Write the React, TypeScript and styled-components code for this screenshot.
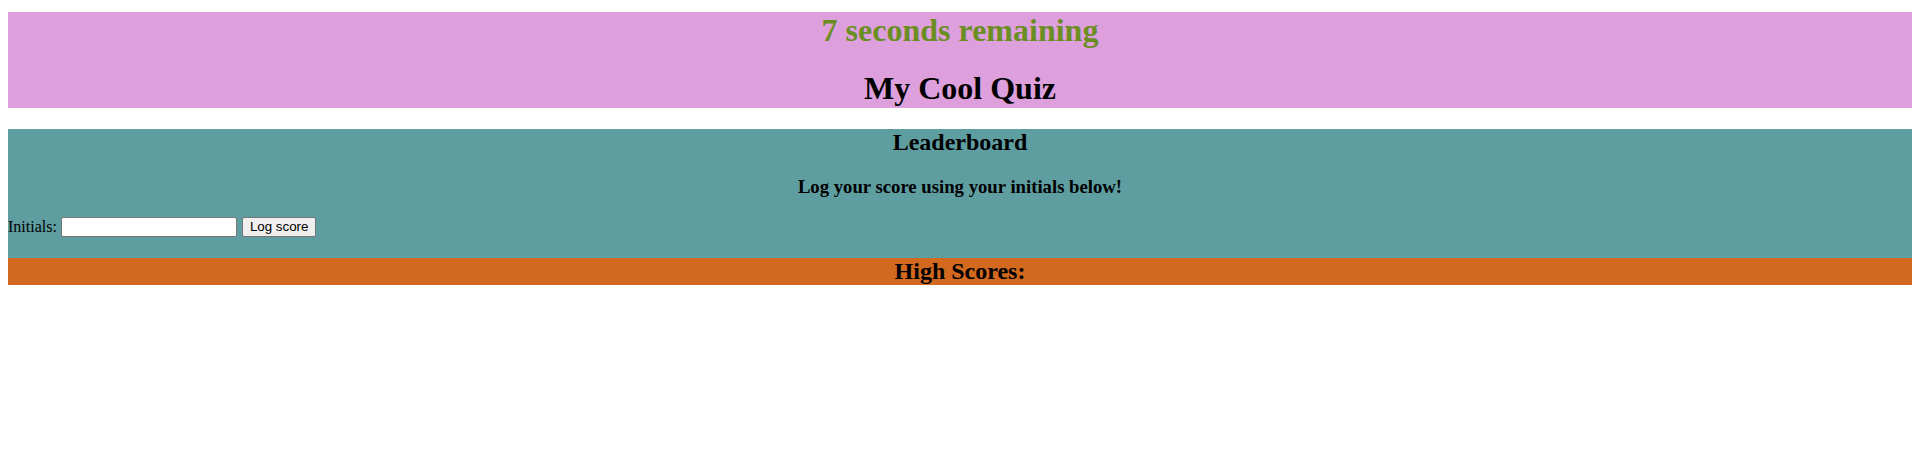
import React from "react";
import styled, { createGlobalStyle } from "styled-components";

const GlobalStyle = createGlobalStyle`
  html, body {
    margin: 0;
    padding: 0;
    background: #ffffff;
    overflow: hidden;
  }
  body {
    font-family: "Liberation Serif", "Times New Roman", serif;
    color: #000000;
  }
`;

const Page = styled.div`
  width: 1904px;
  padding: 12px 0 0 8px;
`;

const Header = styled.header`
  background: #dda0dd;
  text-align: center;
  padding-bottom: 1px;
`;

const Timer = styled.div`
  font-size: 32px;
  font-weight: bold;
  line-height: 37px;
  color: #6b8e23;
`;

const Title = styled.h1`
  margin: 21px 0 0;
  font-size: 32px;
  font-weight: bold;
  line-height: 37px;
`;

const Leaderboard = styled.section`
  margin-top: 21px;
  background: #5f9ea0;
`;

const BoardHeading = styled.h2`
  margin: 0;
  font-size: 24px;
  line-height: 26px;
  text-align: center;
`;

const Prompt = styled.h3`
  margin: 21px 0 0;
  font-size: 18.72px;
  line-height: 21px;
  text-align: center;
`;

const ScoreForm = styled.form`
  margin: 0;
  padding: 20px 0 21px;
  display: flex;
  align-items: center;
  height: 20px;
  box-sizing: content-box;
`;

const Label = styled.label`
  font-size: 16px;
  line-height: 20px;
  margin-right: 4px;
`;

const TextInput = styled.input`
  box-sizing: border-box;
  width: 176px;
  height: 20px;
  margin: 0;
  padding: 1px 2px;
  border: 1px solid #767676;
  border-radius: 2px;
  background: #ffffff;
  font-family: "Liberation Sans", Arial, sans-serif;
  font-size: 13.33px;
`;

const SubmitButton = styled.button`
  box-sizing: border-box;
  height: 20px;
  margin: 0 0 0 5px;
  padding: 0 7px;
  border: 1px solid #767676;
  border-radius: 2px;
  background: #efefef;
  color: #000000;
  font-family: "Liberation Sans", Arial, sans-serif;
  font-size: 13.33px;
  line-height: 16px;
`;

const HighScores = styled.h2`
  margin: 0;
  background: #d2691e;
  font-size: 24px;
  line-height: 27px;
  text-align: center;
`;

export default function App() {
  return (
    <>
      <GlobalStyle />
      <Page>
        <Header>
          <Timer>7 seconds remaining</Timer>
          <Title>My Cool Quiz</Title>
        </Header>
        <Leaderboard>
          <BoardHeading>Leaderboard</BoardHeading>
          <Prompt>Log your score using your initials below!</Prompt>
          <ScoreForm onSubmit={(e) => e.preventDefault()}>
            <Label htmlFor="initials">Initials:</Label>
            <TextInput id="initials" type="text" />
            <SubmitButton type="submit">Log score</SubmitButton>
          </ScoreForm>
        </Leaderboard>
        <HighScores>High Scores:</HighScores>
      </Page>
    </>
  );
}
